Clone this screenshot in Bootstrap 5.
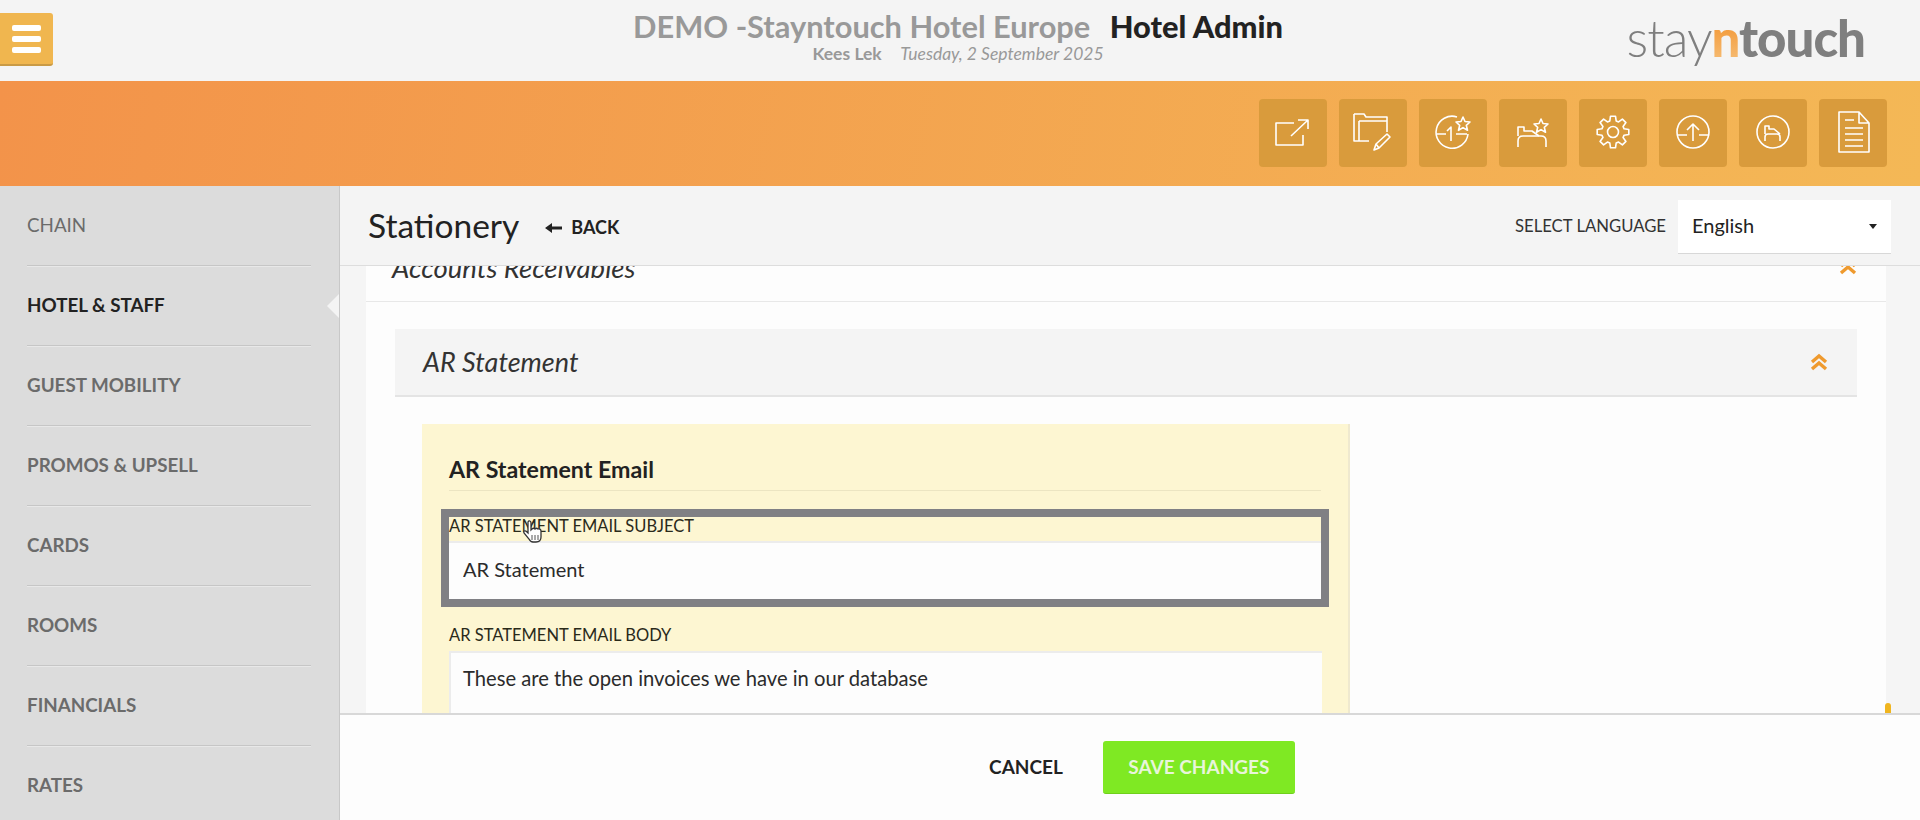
<!DOCTYPE html>
<html lang="en">
<head>
<meta charset="utf-8">
<title>Stationery</title>
<link href="https://cdn.jsdelivr.net/npm/bootstrap@5.3.0/dist/css/bootstrap.min.css" rel="stylesheet">
<style>
html,body{height:820px;overflow:hidden}
body{font-family:"Lato","Liberation Sans",sans-serif;color:#222;background:#f4f4f4}
.shell{height:820px}
.topbar{height:81px;background:#f4f4f4;flex:none}
.top-left,.logo{flex:1 1 0;min-width:0}
.burger{width:53px;height:53px;margin-top:13px;background:#f0b64f;border:0;border-bottom:2px solid #c99a45;border-radius:0 3px 3px 0;gap:5px;padding:0 0 0 12px}
.burger i{display:block;width:29px;height:6px;border-radius:2px;background:#fff}
.brand{padding-top:9px;text-align:center;line-height:1;flex:none;margin-right:4px}
.brand-line{font-size:30.8px;font-weight:700;color:#999;line-height:36px;white-space:nowrap}
.brand-line b{color:#222;margin-left:12px}
.brand-sub{font-size:17.5px;color:#999;line-height:18px;margin-top:0;white-space:nowrap}
.brand-sub em{font-weight:400;margin-left:14px}
.logo{text-align:right;font-size:51px;line-height:1;color:#7f7f7f;padding:12px 0 0;letter-spacing:-1px;white-space:nowrap}
.logo-in{margin-right:55px}
.logo span{font-weight:300}
.logo b{font-weight:900}
.logo .ln{background:linear-gradient(#f28a1e,#f6c27e);-webkit-background-clip:text;background-clip:text;color:transparent}
.ribbon{height:105px;flex:none;background:linear-gradient(100deg,#f3934a,#f4b856);padding:18px 33px 0 0;gap:12px}
.tool{width:68px;height:68px;background:#d99b3c;border:0;border-radius:4px;padding:0;flex:none}
.tool svg{width:48px;height:48px;fill:none;stroke:#fff;stroke-width:1.6;stroke-linejoin:round}
.side{width:340px;flex:none;background:#dcdcdc;border-right:1px solid #c8c8c8;overflow:hidden}
.side-item{height:80px;margin:0 28px 0 27px;border-bottom:1px solid #c6c6c6;box-shadow:0 1px 0 #e8e8e8;font-size:18.8px;font-weight:700;color:#6b6b6b;padding-top:27px;line-height:24px;position:relative}
.side-item:first-child{font-weight:400}
.side-item.on{color:#222}
.side-item.on::after{content:"";position:absolute;right:-28px;top:28px;border:12px solid transparent;border-right-color:#f4f4f4;border-left:0}
.main{min-width:0}
.head{height:80px;flex:none;background:#f4f4f4;border-bottom:1px solid #ddd;padding:0 29px 0 28px;z-index:2}
.head h1{font-size:33.5px;font-weight:400;margin:0;line-height:1;color:#222}
.back{font-size:18px;font-weight:700;color:#222;margin-left:26px;padding-top:4px;text-decoration:none;gap:9px}
.back svg{width:17px;height:12px}
.lang-label{font-size:16.7px;color:#333;margin:2px 12px 0 0}
.lang{width:213px;height:54px;margin-top:2px;border:0;border-bottom:1px solid #d8d8d8;border-radius:0;background-color:#fff;font-size:20px;color:#222;padding:0 14px 3px;background-size:8px 5px;background-position:right 14px center;background-image:url("data:image/svg+xml,%3Csvg xmlns='http://www.w3.org/2000/svg' viewBox='0 0 8 5'%3E%3Cpath d='M0 0h8L4 5z' fill='%23222'/%3E%3C/svg%3E")}
.scroller{overflow:hidden;background:#f5f5f5;min-height:0;padding:0 34px 0 26px;position:relative}
.panel{background:#fdfdfd;height:600px}
.acc-row{height:36px;border-bottom:1px solid #e8e8e8;padding:0 29px 0 26px;font-size:27.5px;font-style:italic;font-weight:400;color:#333;overflow:hidden;line-height:1}
.acc-row span{display:block;margin-top:-12px}
.chev{width:18px;height:18px;stroke:#ef9a2e;stroke-width:3.4;fill:none;flex:none}
.acc-row .chev{margin-top:-9px}
.arcard{margin:27px 29px 0 29px;border:0;border-radius:0;background:#fdfdfd}
.archead{height:68px;background:#f4f4f4;border-bottom:2px solid #e4e4e4;padding:0 29px 0 28px;font-size:27px;font-style:italic;font-weight:400;color:#333}
.arbody{padding:27px 27px}
.yellow{width:928px;background:#fdf6d2;padding:27px 27px 0;border-right:2px solid #efe9cf;height:400px}
.yellow h2{font-size:23.2px;font-weight:700;margin:0;line-height:36px;height:40px;border-bottom:1px solid #ece5c2;color:#222}
.hl{margin:18px -8px 0 -8px;border:8px solid #808084}
.lbl{font-size:16.5px;line-height:18px;padding-bottom:6px;color:#2a2a1a;margin:0;display:block;white-space:nowrap;text-transform:uppercase}
.fld{border:0;border-top:2px solid #ececec;border-radius:0;background:#fdfdfd;font-size:20px;color:#2b2b2b;padding:0 14px 4px;height:58px;box-shadow:none}
.body-lbl{margin-top:19px}
.ta{height:110px;margin-top:1px;border-left:2px solid #ececec;resize:none;padding:11px 12px 0;line-height:28px;width:873px;font-size:20.2px}
.thumb{position:absolute;right:29px;bottom:0;width:6px;height:10px;background:#f0b51f;border-radius:3px 3px 0 0}
.foot{height:107px;flex:none;background:#fdfdfd;border-top:2px solid #d8d8d8;gap:40px;padding-left:24px;z-index:2}
.cancel{font-size:19px;font-weight:700;color:#222;border:0;background:none;padding:0}
.save{width:192px;height:53px;background:#7fe923;border:0;border-bottom:1px solid #6fcf1c;border-radius:3px;color:#e8f5da;font-size:19px;font-weight:700;padding:0}
.hand{position:absolute;left:522px;top:519px;width:22px;height:26px;z-index:5}
</style>
</head>
<body>
<div class="shell d-flex flex-column">
  <header class="topbar d-flex">
    <div class="top-left"><button class="burger d-flex flex-column justify-content-center" aria-label="Menu"><i></i><i></i><i></i></button></div>
    <div class="brand">
      <div class="brand-line">DEMO -Stayntouch Hotel Europe <b>Hotel Admin</b></div>
      <div class="brand-sub"><strong>Kees Lek</strong> <em>Tuesday, 2 September 2025</em></div>
    </div>
    <div class="logo"><div class="logo-in"><span>stay</span><b class="ln">n</b><b>touch</b></div></div>
  </header>
  <div class="ribbon d-flex justify-content-end">
    <button class="tool" aria-label="Open"><svg viewBox="0 0 48 48"><path d="M34 26v10H7V14h18"/><path d="M22 27 39 11M29 11h10v9"/></svg></button>
    <button class="tool" aria-label="Folders"><svg viewBox="0 0 48 48"><path d="M5 5h10l2 3h21v15M5 5v27h15M10 12h28M10 12v20"/><path d="m25 41 2-6 11-10 3 3-11 11zM27 35l3 4"/></svg></button>
    <button class="tool" aria-label="Rates"><svg viewBox="0 0 48 48"><path d="M28 8a16 16 0 1 0 11 17"/><path d="M8 25h9M27 25h11M22 32V18l-4 4"/><path d="m34 8 2 4.500 5 .5-3.700 3.300 1.200 5-4.500-2.700-4.500 2.700 1.200-5L27 13l5-.5z"/></svg></button>
    <button class="tool" aria-label="Rooms"><svg viewBox="0 0 48 48"><path d="M9 38v-6c0-3 2-5 5-5h18c3 0 5 2 5 5v6"/><path d="M9 27v-9h6v4h8l7 5"/><path d="m32 10 2 4.500 5 .5-3.700 3.300 1.200 5-4.500-2.700-4.500 2.700 1.200-5L25 15l5-.5z"/></svg></button>
    <button class="tool" aria-label="Settings"><svg viewBox="0 0 48 48"><circle cx="24" cy="23" r="5.500"/><path d="M20.830 11.950 21.500 7.200h5l.67 4.750 2.400 1 3.830-2.890 3.540 3.540-2.890 3.830 1 2.400 4.750.67v5l-4.750.67-1 2.400 2.890 3.830-3.540 3.540-3.830-2.890-2.400 1-.67 4.750h-5l-.67-4.750-2.400-1-3.830 2.890-3.540-3.540 2.890-3.830-1-2.400-4.750-.67v-5l4.750-.67 1-2.400-2.890-3.830 3.540-3.540 3.830 2.890z"/></svg></button>
    <button class="tool" aria-label="Upsell"><svg viewBox="0 0 48 48"><circle cx="24" cy="23" r="16"/><path d="M8 26h10M30 26h10M24 32V15M18 21l6-6 6 6"/></svg></button>
    <button class="tool" aria-label="Room status"><svg viewBox="0 0 48 48"><circle cx="24" cy="23" r="16"/><path d="M16 32v-4c0-2 1-3 3-3h9c2 0 3 1 3 3v4M16 25v-8h4v3h5l6 5"/></svg></button>
    <button class="tool" aria-label="Document"><svg viewBox="0 0 48 48"><path d="M10 3h20l10 11v29H10zM30 3v11h10"/><path d="M16 11h9M16 19h18M16 25h18M16 31h18M16 37h18"/></svg></button>
  </div>
  <div class="d-flex flex-grow-1" style="min-height:0">
    <nav class="side">
      <div class="side-item">CHAIN</div>
      <div class="side-item on">HOTEL &amp; STAFF</div>
      <div class="side-item">GUEST MOBILITY</div>
      <div class="side-item">PROMOS &amp; UPSELL</div>
      <div class="side-item">CARDS</div>
      <div class="side-item">ROOMS</div>
      <div class="side-item">FINANCIALS</div>
      <div class="side-item">RATES</div>
    </nav>
    <main class="main d-flex flex-column flex-grow-1">
      <div class="head d-flex align-items-center">
        <h1>Stationery</h1>
        <a class="back d-inline-flex align-items-center" href="#"><svg viewBox="0 0 17 12"><path d="M0 6l7-5v3.500h10v3H7V11z" fill="#222"/></svg>BACK</a>
        <div class="ms-auto d-flex align-items-center">
          <span class="lang-label">SELECT LANGUAGE</span>
          <select class="form-select lang" aria-label="Language"><option>English</option></select>
        </div>
      </div>
      <div class="scroller flex-grow-1">
        <div class="panel">
          <div class="acc-row d-flex justify-content-between"><span>Accounts Receivables</span><svg class="chev" viewBox="0 0 18 18"><path d="m2 16 7-6 7 6M2 9l7-6 7 6"/></svg></div>
          <div class="card arcard">
            <div class="archead d-flex justify-content-between align-items-center"><span>AR Statement</span><svg class="chev" viewBox="0 0 18 18"><path d="m2 16 7-6 7 6M2 9l7-6 7 6"/></svg></div>
            <div class="arbody">
              <div class="yellow">
                <h2>AR Statement Email</h2>
                <div class="hl">
                  <label class="lbl" for="subj">AR Statement Email Subject</label>
                  <input id="subj" class="form-control fld" value="AR Statement">
                </div>
                <label class="lbl body-lbl" for="bodytxt">AR Statement Email Body</label>
                <textarea id="bodytxt" class="form-control fld ta">These are the open invoices we have in our database</textarea>
              </div>
            </div>
          </div>
        </div>
        <div class="thumb"></div>
      </div>
      <footer class="foot d-flex align-items-center justify-content-center">
        <button class="cancel">CANCEL</button>
        <button class="save">SAVE CHANGES</button>
      </footer>
    </main>
  </div>
</div>
<svg class="hand" viewBox="0 0 22 26"><path d="M6 3c1-2 3-1 3 1v7l1-1c1-1 2-1 3 0 1-1 2-1 3 0 1-.5 3 0 3 2v6c0 3-2 5-5 5h-3c-2 0-3-1-4-3L2 14c-1-2 1-3 3-1l1 1z" fill="#fff" stroke="#333" stroke-width="1.300"/><path d="M10 16v5M13 16v5M16 16v5" stroke="#555"/></svg>
</body>
</html>
